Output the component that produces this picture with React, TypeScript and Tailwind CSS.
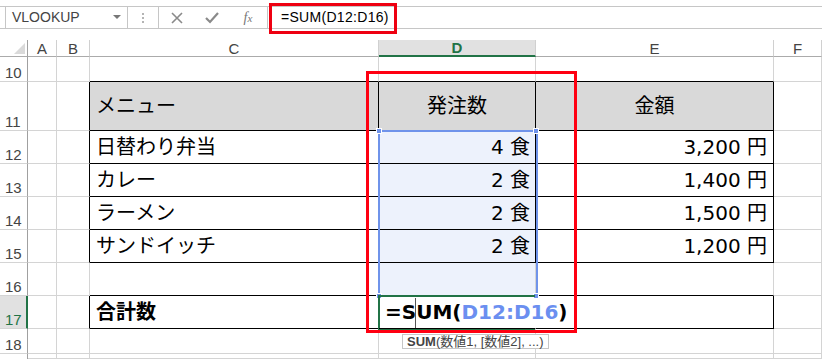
import clsx from 'clsx'
import type { ReactNode } from 'react'

// ─── Sheet geometry ───────────────────────────────────────────────────────────

const grid = 'border-r border-b border-[#d4d4d4]'
const cellFont = { fontFamily: '"DejaVu Sans", "Noto Sans CJK JP", sans-serif' }
const uiFont = { fontFamily: '"Liberation Sans", "Noto Sans CJK JP", sans-serif' }

function Cell({ children, className }: { children?: ReactNode; className?: string }) {
  return (
    <div
      className={clsx(grid, 'flex items-center text-[20px] text-black overflow-visible whitespace-nowrap', className)}
      style={cellFont}
    >
      {children}
    </div>
  )
}

function RowHead({ n, active }: { n: string; active?: boolean }) {
  return (
    <div
      className={clsx(
        'flex items-end pl-[5px] pb-[1px] text-[15px] border-b border-[#d4d4d4] leading-none',
        active
          ? 'bg-[#e1e1e1] text-[#217346] border-r-2 border-r-[#217346]'
          : 'border-r border-r-[#a0a0a0] text-[#444]',
      )}
      style={uiFont}
    >
      {n}
    </div>
  )
}

function ColHead({ label, active }: { label?: string; active?: boolean }) {
  return (
    <div
      className={clsx(
        'flex items-center justify-center text-[15px] leading-none border-r border-[#d0d0d0]',
        active
          ? 'bg-[#e1e1e1] text-[#217346] font-bold border-b-2 border-b-[#217346]'
          : 'text-[#444] border-b border-b-[#ababab]',
      )}
      style={uiFont}
    >
      {label}
    </div>
  )
}

// ─── Formula bar ──────────────────────────────────────────────────────────────

function FormulaBar() {
  return (
    <div className="relative h-[40px] w-full pt-[6px]" style={uiFont}>
      <div className="flex h-[23px] items-stretch border-y border-[#c6c6c6]">
        <div className="ml-[5px] w-[123px] flex items-center justify-between pl-[6px] pr-[6px] text-[14px] text-[#444] border-x border-[#c6c6c6]">
          <span>VLOOKUP</span>
          <svg width="8" height="5" viewBox="0 0 8 5">
            <polygon points="0,0 8,0 4,4" fill="#777" />
          </svg>
        </div>
        <div className="w-[30px] flex flex-col items-center justify-center gap-[2px]">
          <span className="w-[2px] h-[2px] bg-[#b4b4b4]" />
          <span className="w-[2px] h-[2px] bg-[#b4b4b4]" />
          <span className="w-[2px] h-[2px] bg-[#b4b4b4]" />
        </div>
        <div className="w-[110px] flex items-center border-l border-r border-[#c6c6c6]">
          <div className="w-[36px] flex justify-center">
            <svg width="12" height="12" viewBox="0 0 12 12">
              <path d="M1 1 L11 11 M11 1 L1 11" stroke="#8a8a8a" strokeWidth="1.6" />
            </svg>
          </div>
          <div className="w-[34px] flex justify-center">
            <svg width="14" height="12" viewBox="0 0 14 12">
              <path d="M1 6 L5 10 L13 1" stroke="#8a8a8a" strokeWidth="2.2" fill="none" />
            </svg>
          </div>
          <div className="w-[38px] flex justify-center">
            <span
              className="italic text-[14px] text-[#777]"
              style={{ fontFamily: '"Liberation Serif", serif' }}
            >
              f<span className="text-[11px]">x</span>
            </span>
          </div>
        </div>
        <div className="flex items-center pl-[13px] text-[14px] tracking-[0.3px] text-black">
          =SUM(D12:D16)
        </div>
      </div>
      <div className="absolute left-[269px] top-[3px] w-[128px] h-[31px] border-[3px] border-[#ee0011]" />
    </div>
  )
}

// ─── App ──────────────────────────────────────────────────────────────────────

export default function App() {
  const sel = 'bg-[#edf2fc]'
  return (
    <div className="relative w-[822px] h-[359px] overflow-hidden bg-white">
      <FormulaBar />

      <div className="grid grid-cols-[28px_29px_33px_289px_157px_238px_48px] grid-rows-[17px_25px_49px_33px_33px_33px_33px_33px_33px_25px_5px]">
        {/* header row */}
        <div className="relative border-r border-r-[#a0a0a0] border-b border-b-[#ababab]">
          <svg className="absolute right-[2px] bottom-[2px]" width="11" height="11" viewBox="0 0 11 11">
            <polygon points="11,0 11,11 0,11" fill="#dadada" />
          </svg>
        </div>
        <ColHead label="A" />
        <ColHead label="B" />
        <ColHead label="C" />
        <ColHead label="D" active />
        <ColHead label="E" />
        <ColHead label="F" />

        {/* 10 */}
        <RowHead n="10" />
        <Cell />
        <Cell />
        <Cell className="border-b-black" />
        <Cell className="border-b-black" />
        <Cell className="border-b-black" />
        <Cell />

        {/* 11 */}
        <RowHead n="11" />
        <Cell />
        <Cell className="border-r-black" />
        <Cell className="bg-[#d9d9d9] border-r-black border-b-black pl-[6px]">メニュー</Cell>
        <Cell className="bg-[#d9d9d9] border-r-black border-b-black justify-center">発注数</Cell>
        <Cell className="bg-[#d9d9d9] border-r-black border-b-black justify-center">金額</Cell>
        <Cell />

        {[
          ['12', '日替わり弁当', '4', '3,200'],
          ['13', 'カレー', '2', '1,400'],
          ['14', 'ラーメン', '2', '1,500'],
          ['15', 'サンドイッチ', '2', '1,200'],
        ].map(([n, menu, qty, price]) => (
          <div key={n} className="contents">
            <RowHead n={n} />
            <Cell />
            <Cell className="border-r-black" />
            <Cell className="border-r-black border-b-black pl-[6px]">{menu}</Cell>
            <Cell className={clsx(sel, 'border-r-black border-b-black justify-end pr-[5px]')}>
              {qty} 食
            </Cell>
            <Cell className="border-r-black border-b-black justify-end pr-[6px]">{price} 円</Cell>
            <Cell />
          </div>
        ))}

        {/* 16 */}
        <RowHead n="16" />
        <Cell />
        <Cell />
        <Cell className="border-b-black" />
        <Cell className={clsx(sel, 'border-b-black')} />
        <Cell className="border-b-black" />
        <Cell />

        {/* 17 */}
        <RowHead n="17" active />
        <Cell />
        <Cell className="border-r-black" />
        <Cell className="border-r-black border-b-black pl-[6px] font-bold">合計数</Cell>
        <Cell className="border-r-transparent border-b-black pl-[6px] font-bold relative z-10">
          <span>=SUM(</span>
          <span className="text-[#6b8ff0]">D12:D16</span>
          <span>)</span>
        </Cell>
        <Cell className="border-r-black border-b-black" />
        <Cell />

        {/* 18 */}
        <RowHead n="18" />
        <Cell />
        <Cell />
        <Cell />
        <Cell />
        <Cell />
        <Cell />

        {/* 19 (partial) */}
        <div className="border-r border-r-[#a0a0a0]" />
        <Cell />
        <Cell />
        <Cell />
        <Cell />
        <Cell />
        <Cell />
      </div>

      {/* selection range D12:D16 */}
      <div className="absolute left-[378px] top-[130px] w-[160px] h-[167px] border-2 border-[#6f93ea]" />
      <div className="absolute left-[376px] top-[128px] w-[6px] h-[6px] bg-[#6f93ea] border border-white" />
      <div className="absolute left-[533px] top-[128px] w-[6px] h-[6px] bg-[#6f93ea] border border-white" />
      <div className="absolute left-[376px] top-[293px] w-[6px] h-[6px] bg-[#6f93ea] border border-white" />
      <div className="absolute left-[533px] top-[293px] w-[6px] h-[6px] bg-[#6f93ea] border border-white" />

      {/* active edit cell D17 */}
      <div className="absolute left-[378px] top-[295px] w-[157px] h-[35px] border-l-2 border-y-2 border-[#217346] pointer-events-none" />
      <div className="absolute left-[415px] top-[298px] w-[1px] h-[30px] bg-[#555]" />

      {/* red highlight around column D */}
      <div className="absolute left-[366px] top-[71px] w-[211px] h-[262px] border-[3px] border-[#ff0011]" />

      {/* function tooltip */}
      <div
        className="absolute left-[402px] top-[334px] h-[15px] flex items-center px-[4px] border border-[#c6c6c6] bg-white text-[13px] text-[#444] leading-none whitespace-nowrap"
        style={uiFont}
      >
        <span className="font-bold">SUM</span>(数値1, [数値2], ...)
      </div>
    </div>
  )
}
